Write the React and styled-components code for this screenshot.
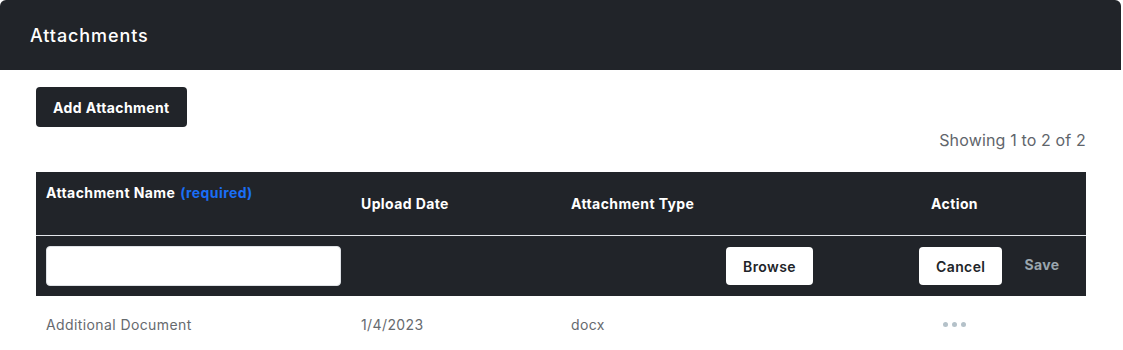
import React, { useState } from "react";
import styled, { createGlobalStyle } from "styled-components";

const GlobalStyle = createGlobalStyle`
  body {
    margin: 0;
    background: #ffffff;
    font-family: Inter, "Noto Sans", "Liberation Sans", sans-serif;
    letter-spacing: 0.4px;
  }
`;

const Card = styled.div`
  width: 1121px;
  background: #ffffff;
`;

const CardHeader = styled.div`
  height: 70px;
  display: flex;
  align-items: center;
  padding: 0 30px;
  background: #212429;
  border-radius: 6px 6px 0 0;
  color: #ffffff;
  font-size: 18px;
  font-weight: 500;
  letter-spacing: 0.9px;
`;

const CardBody = styled.div`
  padding: 17px 35px 0 36px;
  display: flex;
  flex-direction: column;
`;

const DarkButton = styled.button`
  align-self: flex-start;
  height: 40px;
  padding: 0 17px;
  border: none;
  border-radius: 4px;
  background: #212429;
  color: #ffffff;
  font-family: inherit;
  letter-spacing: inherit;
  font-size: 14px;
  font-weight: 700;
  cursor: pointer;
`;

const Showing = styled.div`
  align-self: flex-end;
  margin-top: 3px;
  font-size: 16px;
  color: #5f656b;
  line-height: 20px;
  letter-spacing: 0.15px;
`;

const Table = styled.div`
  margin-top: 22px;
  width: 1050px;
`;

const Row = styled.div`
  display: grid;
  grid-template-columns: 315px 210px 262px 263px;
  background: ${(p) => (p.$dark ? "#212429" : "#ffffff")};
  min-height: ${(p) => p.$height}px;
  border-bottom: ${(p) => (p.$divider ? "1px solid #e3e6ea" : "none")};
`;

const HeadCell = styled.div`
  padding: ${(p) => (p.$top ? "12px 10px 0" : "0 10px")};
  display: flex;
  align-items: ${(p) => (p.$top ? "flex-start" : "center")};
  justify-content: ${(p) => (p.$center ? "center" : "flex-start")};
  color: #ffffff;
  font-size: 14px;
  font-weight: 700;
`;

const Required = styled.span`
  color: #1a6ef5;
  margin-left: 5px;
`;

const Cell = styled.div`
  padding: 0 10px;
  display: flex;
  align-items: center;
  justify-content: ${(p) => p.$justify || "flex-start"};
  gap: 6px;
  color: #666a6e;
  font-size: 14px;
`;

const NameInput = styled.input`
  width: 295px;
  height: 40px;
  box-sizing: border-box;
  border: 1px solid #dfe2e6;
  border-radius: 4px;
  background: #ffffff;
  padding: 0 10px;
  font-family: inherit;
  font-size: 14px;
  outline: none;
`;

const LightButton = styled.button`
  height: 38px;
  padding: 0 17px;
  border: none;
  border-radius: 4px;
  background: #ffffff;
  color: #212429;
  font-family: inherit;
  letter-spacing: inherit;
  font-size: 14px;
  font-weight: 600;
  cursor: pointer;
`;

const TextButton = styled.button`
  height: 38px;
  padding: 0 17px 0 16px;
  border: none;
  background: transparent;
  color: #9aa6ae;
  font-family: inherit;
  letter-spacing: inherit;
  font-size: 14px;
  font-weight: 700;
  margin-top: -4px;
  cursor: pointer;
`;

const Dots = styled.span`
  display: flex;
  gap: 4px;
  margin-top: 1px;
  & > i {
    width: 5px;
    height: 5px;
    border-radius: 50%;
    background: #b4c1c9;
  }
`;

const App = () => {
  const [name, setName] = useState("");

  return (
    <Card>
      <GlobalStyle />
      <CardHeader>Attachments</CardHeader>
      <CardBody>
        <DarkButton>Add Attachment</DarkButton>
        <Showing>Showing 1 to 2 of 2</Showing>
        <Table>
          <Row $dark $height={63} $divider>
            <HeadCell $top>
              Attachment Name<Required>(required)</Required>
            </HeadCell>
            <HeadCell>Upload Date</HeadCell>
            <HeadCell>Attachment Type</HeadCell>
            <HeadCell $center>Action</HeadCell>
          </Row>
          <Row $dark $height={60}>
            <Cell>
              <NameInput value={name} onChange={(e) => setName(e.target.value)} />
            </Cell>
            <Cell />
            <Cell $justify="flex-end">
              <LightButton>Browse</LightButton>
            </Cell>
            <Cell style={{ paddingLeft: 96 }}>
              <LightButton>Cancel</LightButton>
              <TextButton>Save</TextButton>
            </Cell>
          </Row>
          <Row $height={56}>
            <Cell>Additional Document</Cell>
            <Cell>1/4/2023</Cell>
            <Cell>docx</Cell>
            <Cell $justify="center">
              <Dots>
                <i />
                <i />
                <i />
              </Dots>
            </Cell>
          </Row>
        </Table>
      </CardBody>
    </Card>
  );
};

export default App;
